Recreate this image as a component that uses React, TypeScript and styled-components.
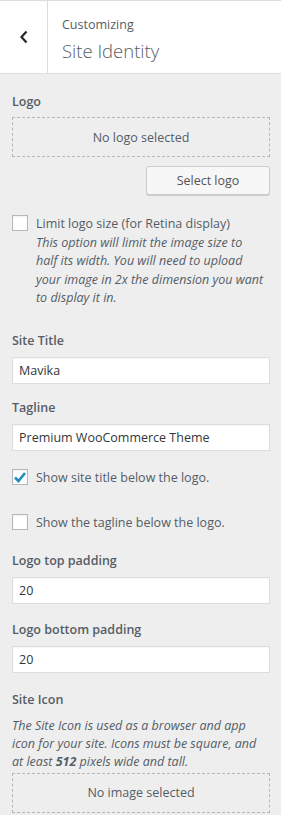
import React from "react";
import styled, { createGlobalStyle } from "styled-components";

const Global = createGlobalStyle`
  html, body { margin: 0; padding: 0; background: #eeeeee; }
  body { font-family: "Open Sans", "Noto Sans", sans-serif; font-size: 12.5px; color: #555d66; }
  * { box-sizing: border-box; }
`;

const Panel = styled.div`
  width: 281px;
  min-height: 815px;
  background: #eeeeee;
  overflow: hidden;
`;

const Header = styled.header`
  display: flex;
  height: 74px;
  background: #fff;
  border-top: 1px solid #dddddd;
  border-bottom: 1px solid #dddddd;
`;

const BackButton = styled.button`
  width: 48px;
  flex: none;
  display: flex;
  align-items: center;
  justify-content: center;
  background: #fff;
  border: none;
  border-right: 1px solid #dddddd;
  padding: 0 0 0 1px;
  color: #23282d;
`;

const TitleBlock = styled.div`
  display: flex;
  flex-direction: column;
  padding: 14px 0 0 14px;
`;

const Kicker = styled.span`
  font-size: 12.5px;
  line-height: 20px;
  color: #555d66;
`;

const Title = styled.h2`
  margin: 2px 0 0;
  font-size: 18.5px;
  font-weight: 300;
  line-height: 28px;
  color: #555d66;
`;

const Content = styled.div`
  padding: 18px 11px 0 12px;
  display: flex;
  flex-direction: column;
`;

const Label = styled.div<{ $mt?: number }>`
  font-weight: 600;
  font-size: 12.5px;
  line-height: 20px;
  color: #555d66;
  margin-top: ${(p) => p.$mt ?? 0}px;
`;

const Placeholder = styled.div<{ $mt: number }>`
  margin-top: ${(p) => p.$mt}px;
  height: 40px;
  border: 1px dashed #b4b9be;
  display: flex;
  align-items: center;
  justify-content: center;
  font-size: 12.5px;
  color: #555d66;
`;

const ButtonRow = styled.div`
  display: flex;
  justify-content: flex-end;
  margin-top: 9px;
`;

const Button = styled.button`
  width: 124px;
  height: 29px;
  background: #f7f7f7;
  border: 1px solid #cccccc;
  border-radius: 3px;
  box-shadow: 0 1px 0 #cccccc;
  font-family: inherit;
  font-size: 12.5px;
  color: #555555;
  padding: 0;
`;

const CheckRow = styled.div<{ $mt: number }>`
  display: flex;
  align-items: flex-start;
  gap: 8px;
  margin-top: ${(p) => p.$mt}px;
`;

const Box = styled.span`
  width: 16px;
  height: 16px;
  flex: none;
  background: #fff;
  border: 1px solid #b4b9be;
  box-shadow: inset 0 1px 2px rgba(0, 0, 0, 0.07);
  display: flex;
  align-items: center;
  justify-content: center;
`;

const CheckText = styled.div`
  display: flex;
  flex-direction: column;
  line-height: 18.5px;
  margin-top: 0px;
`;

const Desc = styled.span`
  font-style: italic;
  color: #555d66;
  white-space: nowrap;
`;

const Input = styled.div<{ $mt?: number }>`
  margin-top: ${(p) => p.$mt ?? 6}px;
  height: 27px;
  background: #fff;
  border: 1px solid #dddddd;
  box-shadow: inset 0 1px 2px rgba(0, 0, 0, 0.04);
  padding: 0 6px;
  display: flex;
  align-items: center;
  font-size: 12.5px;
  color: #32373c;
`;

const IconDesc = styled.p`
  margin: 7px 0 0;
  font-style: italic;
  line-height: 18px;
  color: #555d66;
`;

const Bold = styled.span`
  font-weight: 700;
`;

const Check = () => (
  <svg width="14" height="14" viewBox="0 0 14 14">
    <path d="M2 7.5 L5.5 11 L12 3" fill="none" stroke="#1e8cbe" strokeWidth="2.6" />
  </svg>
);

export default function App() {
  return (
    <Panel>
      <Global />
      <Header>
        <BackButton aria-label="Back">
          <svg width="10" height="14" viewBox="0 0 10 14">
            <path d="M7.5 1.5 L2.5 7 L7.5 12.5" fill="none" stroke="#23282d" strokeWidth="2.2" />
          </svg>
        </BackButton>
        <TitleBlock>
          <Kicker>Customizing</Kicker>
          <Title>Site Identity</Title>
        </TitleBlock>
      </Header>
      <Content>
        <Label>Logo</Label>
        <Placeholder $mt={5}>No logo selected</Placeholder>
        <ButtonRow>
          <Button>Select logo</Button>
        </ButtonRow>
        <CheckRow $mt={20}>
          <Box />
          <CheckText>
            <span>Limit logo size (for Retina display)</span>
            <Desc>
              This option will limit the image size to
              <br />
              half its width. You will need to upload
              <br />
              your image in 2x the dimension you want
              <br />
              to display it in.
            </Desc>
          </CheckText>
        </CheckRow>
        <Label $mt={23}>Site Title</Label>
        <Input>Mavika</Input>
        <Label $mt={14}>Tagline</Label>
        <Input>Premium WooCommerce Theme</Input>
        <CheckRow $mt={18}>
          <Box>
            <Check />
          </Box>
          <CheckText>
            <span>Show site title below the logo.</span>
          </CheckText>
        </CheckRow>
        <CheckRow $mt={27}>
          <Box />
          <CheckText>
            <span>Show the tagline below the logo.</span>
          </CheckText>
        </CheckRow>
        <Label $mt={18}>Logo top padding</Label>
        <Input>20</Input>
        <Label $mt={16}>Logo bottom padding</Label>
        <Input>20</Input>
        <Label $mt={17}>Site Icon</Label>
        <IconDesc>
          The Site Icon is used as a browser and app icon for your site. Icons must be square, and at
          least <Bold>512</Bold> pixels wide and tall.
        </IconDesc>
        <Placeholder $mt={2}>No image selected</Placeholder>
      </Content>
    </Panel>
  );
}
